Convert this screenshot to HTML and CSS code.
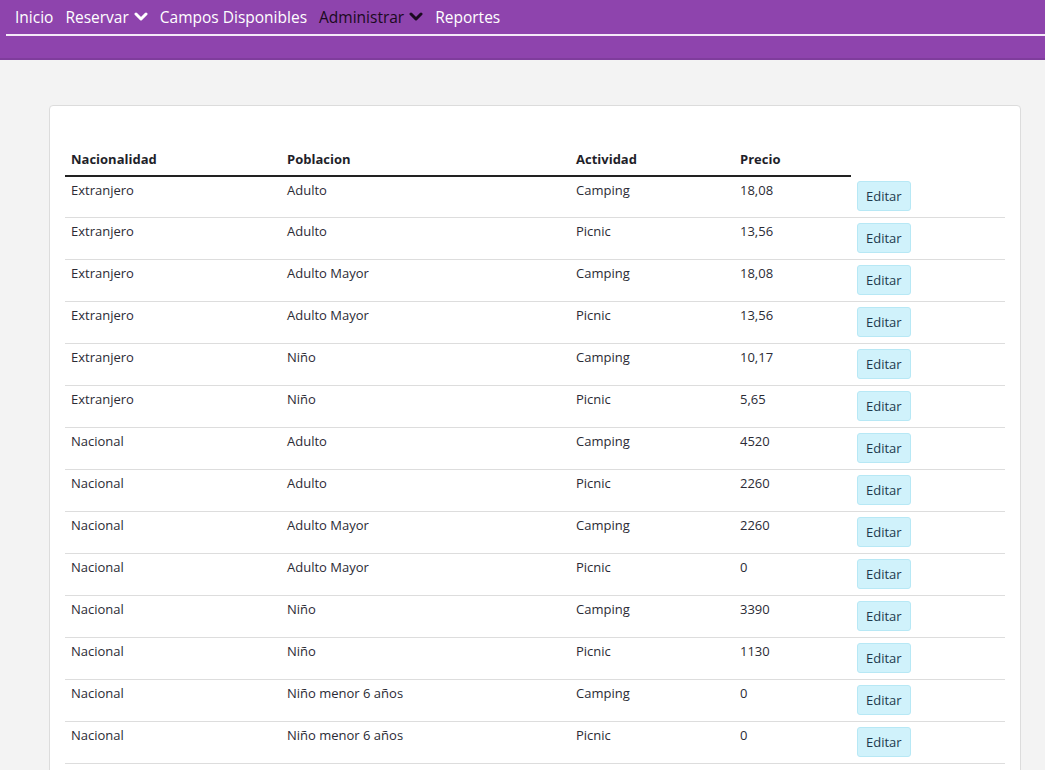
FILE: index.html
```html
<!DOCTYPE html>
<html lang="es">
<head>
<meta charset="utf-8">
<title>Precios</title>
<link rel="stylesheet" href="styles.css">
</head>
<body>
<nav class="navbar">
  <ul class="menu">
    <li><a href="#">Inicio</a></li>
    <li><a href="#">Reservar <svg class="chev" viewBox="0 0 14 10" width="14" height="10"><polyline points="2,2 7,7 12,2"/></svg></a></li>
    <li><a href="#">Campos Disponibles</a></li>
    <li class="active"><a href="#">Administrar <svg class="chev" viewBox="0 0 14 10" width="14" height="10"><polyline points="2,2 7,7 12,2"/></svg></a></li>
    <li><a href="#">Reportes</a></li>
  </ul>
</nav>
<main class="card">
  <table class="tabla">
    <thead>
      <tr>
        <th class="c1">Nacionalidad</th>
        <th class="c2">Poblacion</th>
        <th class="c3">Actividad</th>
        <th class="c4">Precio</th>
      </tr>
    </thead>
    <tbody>
      <tr><td>Extranjero</td><td>Adulto</td><td>Camping</td><td>18,08</td><td><button class="btn">Editar</button></td></tr>
      <tr><td>Extranjero</td><td>Adulto</td><td>Picnic</td><td>13,56</td><td><button class="btn">Editar</button></td></tr>
      <tr><td>Extranjero</td><td>Adulto Mayor</td><td>Camping</td><td>18,08</td><td><button class="btn">Editar</button></td></tr>
      <tr><td>Extranjero</td><td>Adulto Mayor</td><td>Picnic</td><td>13,56</td><td><button class="btn">Editar</button></td></tr>
      <tr><td>Extranjero</td><td>Niño</td><td>Camping</td><td>10,17</td><td><button class="btn">Editar</button></td></tr>
      <tr><td>Extranjero</td><td>Niño</td><td>Picnic</td><td>5,65</td><td><button class="btn">Editar</button></td></tr>
      <tr><td>Nacional</td><td>Adulto</td><td>Camping</td><td>4520</td><td><button class="btn">Editar</button></td></tr>
      <tr><td>Nacional</td><td>Adulto</td><td>Picnic</td><td>2260</td><td><button class="btn">Editar</button></td></tr>
      <tr><td>Nacional</td><td>Adulto Mayor</td><td>Camping</td><td>2260</td><td><button class="btn">Editar</button></td></tr>
      <tr><td>Nacional</td><td>Adulto Mayor</td><td>Picnic</td><td>0</td><td><button class="btn">Editar</button></td></tr>
      <tr><td>Nacional</td><td>Niño</td><td>Camping</td><td>3390</td><td><button class="btn">Editar</button></td></tr>
      <tr><td>Nacional</td><td>Niño</td><td>Picnic</td><td>1130</td><td><button class="btn">Editar</button></td></tr>
      <tr><td>Nacional</td><td>Niño menor 6 años</td><td>Camping</td><td>0</td><td><button class="btn">Editar</button></td></tr>
      <tr><td>Nacional</td><td>Niño menor 6 años</td><td>Picnic</td><td>0</td><td><button class="btn">Editar</button></td></tr>
    </tbody>
  </table>
</main>
</body>
</html>
```
FILE: styles.css
```css
html, body {
  margin: 0;
  padding: 0;
}
body {
  background: #f3f3f3;
  font-family: "Open Sans", "Noto Sans", sans-serif;
  color: #2b2b35;
  overflow: hidden;
  height: 770px;
}
.navbar {
  background: #8e44ad;
  height: 58px;
  border-bottom: 2px solid #7f3d9c;
  box-sizing: content-box;
}
.menu {
  list-style: none;
  margin: 0 0 0 6px;
  padding: 0 0 0 9px;
  height: 34px;
  border-bottom: 2px solid #f4eaf8;
  display: flex;
  align-items: center;
  gap: 12px;
}
.menu a {
  color: #ffffff;
  text-decoration: none;
  font-size: 15.5px;
  display: flex;
  align-items: center;
  gap: 5px;
}
.menu .active a {
  color: #1a0a20;
}
.chev {
  fill: none;
  stroke: currentColor;
  stroke-width: 3;
  stroke-linecap: round;
  stroke-linejoin: round;
}
.card {
  margin: 45px 24px 0 49px;
  background: #ffffff;
  border: 1px solid #dcdcdc;
  border-radius: 4px;
  padding: 39px 15px 40px 15px;
}
.tabla {
  width: 940px;
  border-collapse: collapse;
  font-size: 13px;
  line-height: 18px;
}
.tabla th {
  text-align: left;
  font-weight: 700;
  padding: 5px 6px 7px;
  border-bottom: 2px solid #222222;
  color: #1f1f2a;
}
.c1 { width: 204px; }
.c2 { width: 277px; }
.c3 { width: 152px; }
.c4 { width: 105px; }
.tabla td {
  padding: 4px 6px 7px;
  vertical-align: top;
  border-bottom: 1px solid #dddddd;
}
.tabla td:last-child {
  padding-top: 5px;
  padding-bottom: 6px;
}
.btn {
  font-family: inherit;
  font-size: 13px;
  line-height: 18px;
  padding: 5px 8px;
  background: #d0f2fb;
  border: 1px solid #b7e8f5;
  border-radius: 3px;
  color: #1d3a4d;
  cursor: pointer;
}
```
